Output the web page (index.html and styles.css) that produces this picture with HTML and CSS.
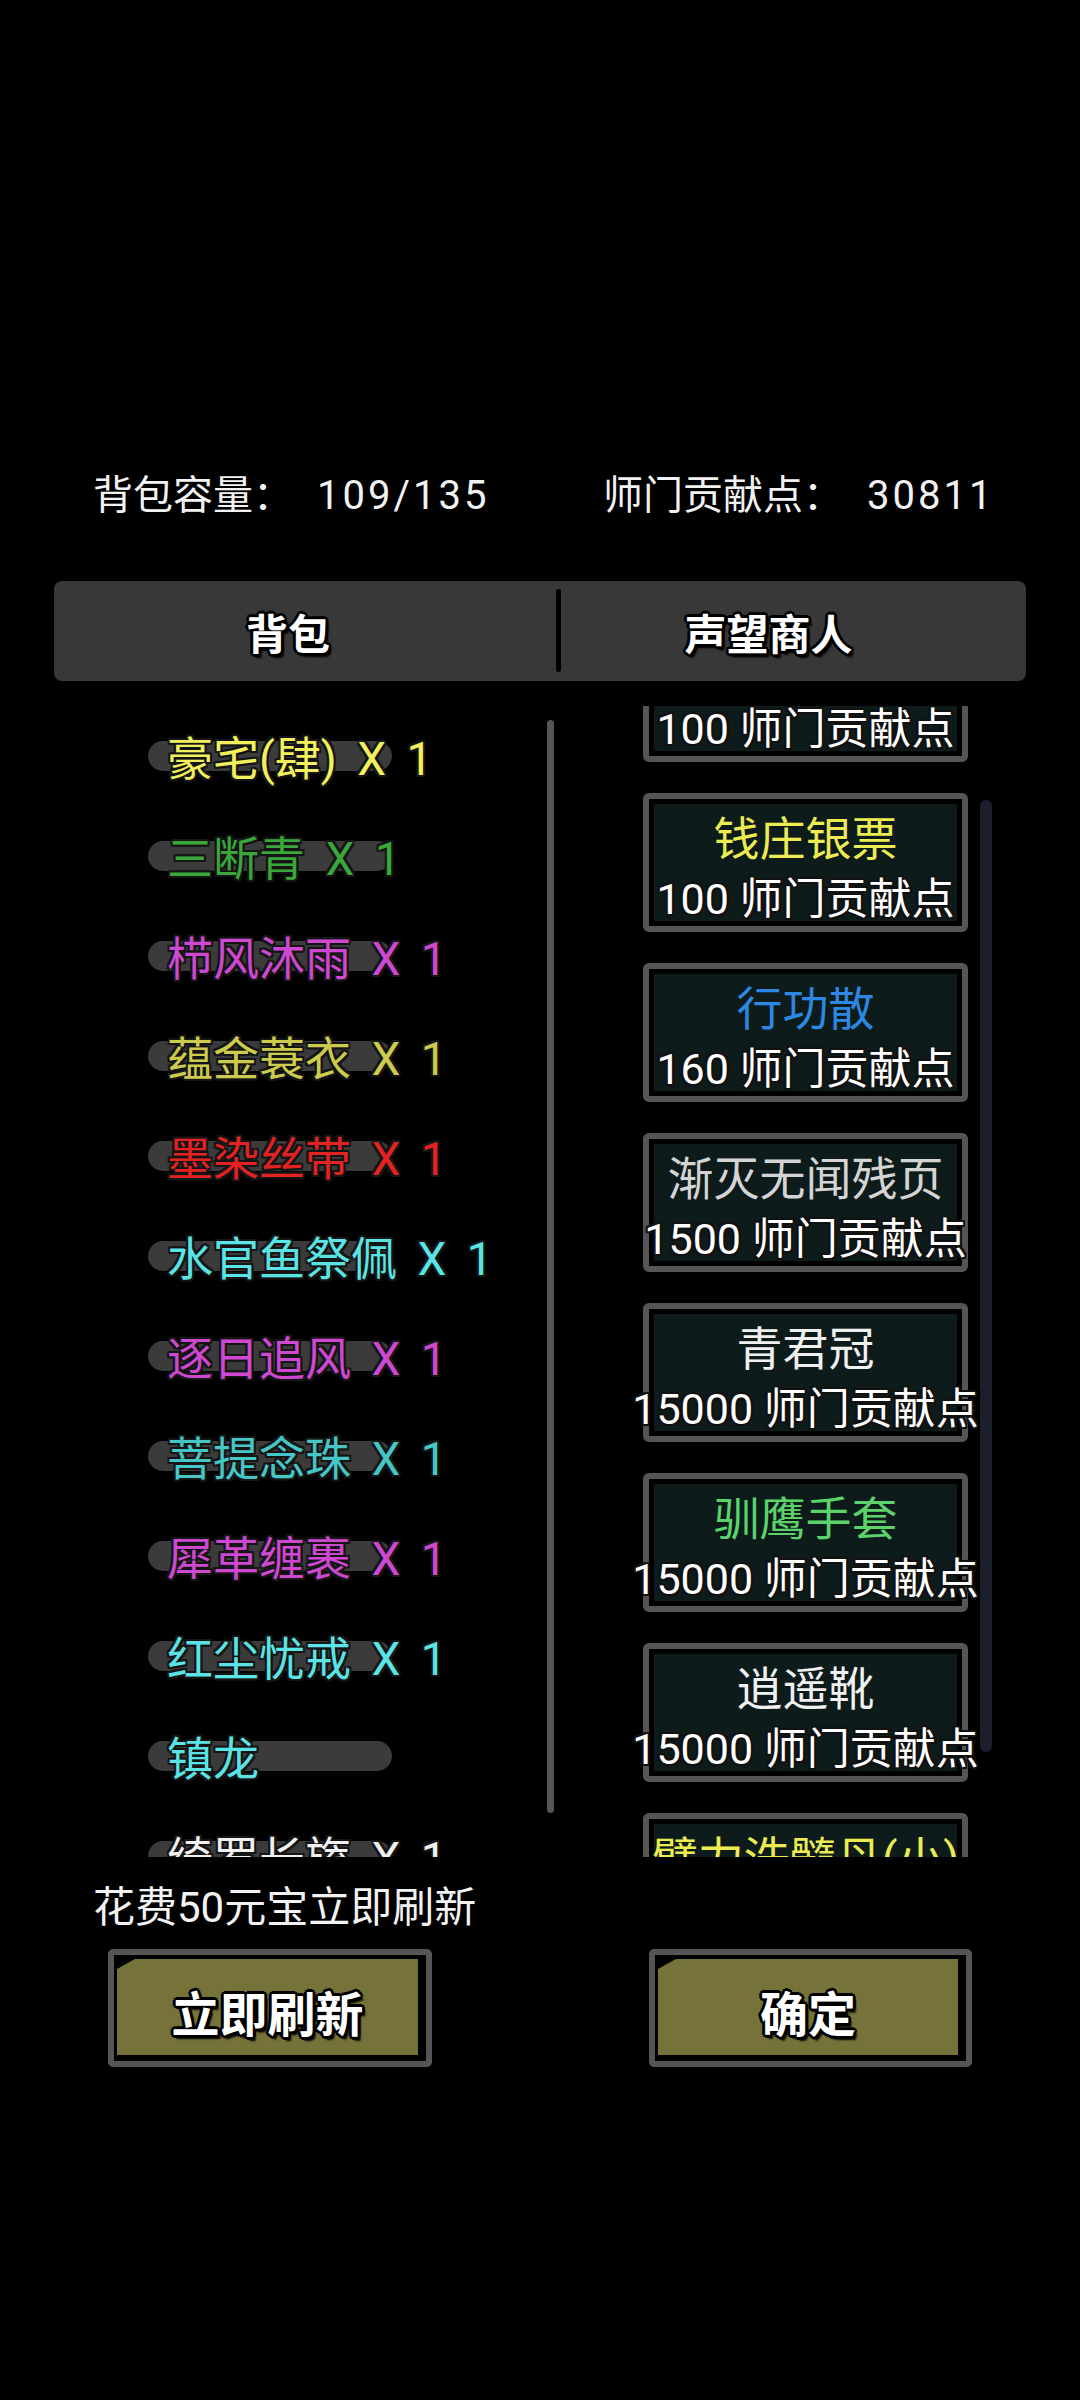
FILE: index.html
```html
<!DOCTYPE html>
<html lang="zh-CN">
<head>
    <meta charset="UTF-8">
    <meta name="viewport" content="width=device-width, initial-scale=1.0">
    <title>背包</title>
    <link rel="stylesheet" href="styles.css">
</head>
<body>
  <div class="screen">
     <div class="stats">
        <div class="stat">背包容量：<span class="num">109/135</span></div>
        <div class="stat">师门贡献点：<span class="num">30811</span></div>
     </div>

     <div class="tabs">
        <div class="tab tab-left">背包</div>
        <div class="tab-line"></div>
        <div class="tab tab-right">声望商人</div>
     </div>

     <div class="panels">
        <div class="bag">
           <div class="bag-row"><span class="pill"></span><span class="item c-yellow">豪宅(肆) X 1</span></div>
           <div class="bag-row"><span class="pill"></span><span class="item c-green">三断青 X 1</span></div>
           <div class="bag-row"><span class="pill"></span><span class="item c-purple">栉风沐雨 X 1</span></div>
           <div class="bag-row"><span class="pill"></span><span class="item c-olive">蕴金蓑衣 X 1</span></div>
           <div class="bag-row"><span class="pill"></span><span class="item c-red">墨染丝带 X 1</span></div>
           <div class="bag-row"><span class="pill"></span><span class="item c-cyan">水官鱼祭佩 X 1</span></div>
           <div class="bag-row"><span class="pill"></span><span class="item c-purple">逐日追风 X 1</span></div>
           <div class="bag-row"><span class="pill"></span><span class="item c-teal">菩提念珠 X 1</span></div>
           <div class="bag-row"><span class="pill"></span><span class="item c-purple">犀革缠裹 X 1</span></div>
           <div class="bag-row"><span class="pill"></span><span class="item c-cyan">红尘忧戒 X 1</span></div>
           <div class="bag-row"><span class="pill"></span><span class="item c-cyan">镇龙</span></div>
           <div class="bag-row"><span class="pill"></span><span class="item c-white">绮罗长旒 X 1</span></div>
        </div>

        <div class="shop">
           <div class="card"><div class="card-in">
              <div class="card-name c-white">壮骨丹</div>
              <div class="card-price">100 师门贡献点</div>
           </div></div>
           <div class="card"><div class="card-in">
              <div class="card-name c-gold">钱庄银票</div>
              <div class="card-price">100 师门贡献点</div>
           </div></div>
           <div class="card"><div class="card-in">
              <div class="card-name c-blue">行功散</div>
              <div class="card-price">160 师门贡献点</div>
           </div></div>
           <div class="card"><div class="card-in">
              <div class="card-name c-grey">渐灭无闻残页</div>
              <div class="card-price">1500 师门贡献点</div>
           </div></div>
           <div class="card"><div class="card-in">
              <div class="card-name c-white">青君冠</div>
              <div class="card-price">15000 师门贡献点</div>
           </div></div>
           <div class="card"><div class="card-in">
              <div class="card-name c-lime">驯鹰手套</div>
              <div class="card-price">15000 师门贡献点</div>
           </div></div>
           <div class="card"><div class="card-in">
              <div class="card-name c-white">逍遥靴</div>
              <div class="card-price">15000 师门贡献点</div>
           </div></div>
           <div class="card"><div class="card-in">
              <div class="card-name c-gold">臂力洗髓丹(小)</div>
              <div class="card-price">500 师门贡献点</div>
           </div></div>
        </div>

        <div class="bar bar-bag"></div>
        <div class="bar bar-shop"></div>
     </div>

     <p class="note">花费50元宝立即刷新</p>

     <div class="actions">
        <button class="btn btn-refresh"><span class="btn-face">立即刷新</span></button>
        <button class="btn btn-ok"><span class="btn-face">确定</span></button>
     </div>
  </div>
</body>
</html>
```

FILE: styles.css
```css
* {
  margin: 0;
  padding: 0;
  box-sizing: border-box;
  font-family: Roboto, "Noto Sans CJK SC", sans-serif;
}

body {
  background-color: #000;
  color: #fff;
}

.screen {
  width: 1080px;
  height: 2400px;
  padding-top: 476px;
  background-color: #000;
}

/* top counters */
.stats {
  display: flex;
  padding-left: 93px;
  font-size: 40px;
  line-height: 40px;
  color: #f2f2f2;
}

.stat:first-child {
  width: 510px;
}

.num {
  margin-left: 24px;
  letter-spacing: 3px;
}

/* tab bar */
.tabs {
  display: flex;
  align-items: center;
  height: 100px;
  margin: 65px 54px 0;
  background-color: #383838;
  border-radius: 8px;
}

.tab {
  flex: 1;
  text-align: center;
  font-size: 42px;
  line-height: 42px;
  font-weight: 700;
  color: #fff;
  text-shadow: 3px 0 #000, -3px 0 #000, 0 3px #000, 0 -3px #000,
    2px 2px #000, -2px -2px #000, 2px -2px #000, -2px 2px #000, 3px 4px 2px #000;
}

.tab-left {
  flex: 0 0 502px;
  padding-right: 34px;
  padding-top: 10px;
}

.tab-right {
  padding-right: 50px;
  padding-top: 10px;
}

.tab-line {
  width: 5px;
  height: 83px;
  margin-top: -1px;
  background-color: #000;
  border-radius: 3px;
}

/* list panels */
.panels {
  position: relative;
  display: flex;
  height: 1151px;
  margin-top: 25px;
  overflow: hidden;
}

.bag {
  width: 643px;
  flex-shrink: 0;
}

.bag-row {
  display: grid;
  align-items: center;
  height: 100px;
  padding-left: 148px;
}

.pill {
  grid-area: 1 / 1;
  width: 244px;
  height: 30px;
  border-radius: 15px;
  background-color: #3b3b3b;
}

.item {
  grid-area: 1 / 1;
  margin-left: 19px;
  padding-top: 5px;
  font-size: 46px;
  line-height: 46px;
  word-spacing: 9px;
  white-space: nowrap;
  text-shadow: 2px 0 #151515, -2px 0 #151515, 0 2px #151515, 0 -2px #151515,
    2px 2px #151515, -2px -2px #151515, 2px -2px #151515, -2px 2px #151515;
}

.shop {
  display: flex;
  flex-direction: column;
  gap: 31px;
  margin-top: -83px;
}

.card {
  width: 325px;
  height: 139px;
  flex-shrink: 0;
  padding: 5px;
  border: 6px solid #555;
  border-radius: 6px;
  background-color: #000;
}

.card-in {
  display: flex;
  flex-direction: column;
  align-items: center;
  height: 100%;
  padding-top: 12px;
  background-color: #0d1b1b;
}

.card-name {
  font-size: 46px;
  line-height: 46px;
  white-space: nowrap;
}

.card-price {
  margin-top: 16px;
  font-size: 43px;
  line-height: 43px;
  color: #fff;
  white-space: nowrap;
  text-shadow: 2px 0 #111, -2px 0 #111, 0 2px #111, 0 -2px #111,
    2px 2px #111, -2px -2px #111, 2px -2px #111, -2px 2px #111;
}

/* scroll bars */
.bar {
  position: absolute;
  border-radius: 4px;
}

.bar-bag {
  left: 547px;
  top: 14px;
  width: 7px;
  height: 1093px;
  background-color: #555;
}

.bar-shop {
  left: 980px;
  top: 94px;
  width: 12px;
  height: 952px;
  background-color: #1b1f2b;
  border-radius: 6px;
}

/* item colours */
.c-yellow { color: #f2f05c; }
.c-green { color: #3aa63c; }
.c-purple { color: #cf48d2; }
.c-olive { color: #cdcb4c; }
.c-red { color: #e42222; }
.c-cyan { color: #5ae4e6; }
.c-teal { color: #46c6c6; }
.c-white { color: #f0f0f0; }
.c-gold { color: #ecec52; }
.c-blue { color: #2c88e2; }
.c-grey { color: #d4d4d4; }
.c-lime { color: #5bd36a; }

/* bottom */
.note {
  margin-top: 30px;
  padding-left: 93px;
  font-size: 42px;
  line-height: 42px;
  color: #f2f2f2;
}

.actions {
  display: flex;
  margin-top: 20px;
  padding-left: 108px;
}

.btn {
  display: flex;
  width: 324px;
  height: 118px;
  padding: 4px 8px 6px 3px;
  border: 6px solid #555;
  border-radius: 5px;
  background-color: #000;
  cursor: pointer;
}

.btn-ok {
  margin-left: 217px;
  width: 323px;
}

.btn-face {
  flex: 1;
  display: flex;
  align-items: center;
  justify-content: center;
  padding-top: 8px;
  background-color: #75733a;
  clip-path: polygon(0 10px, 18px 0, 100% 0, 100% 100%, 0 100%);
  font-size: 48px;
  font-weight: 700;
  color: #fff;
  text-shadow: 3px 0 #000, -3px 0 #000, 0 3px #000, 0 -3px #000,
    2px 2px #000, -2px -2px #000, 2px -2px #000, -2px 2px #000, 3px 4px 2px #000;
}
```
